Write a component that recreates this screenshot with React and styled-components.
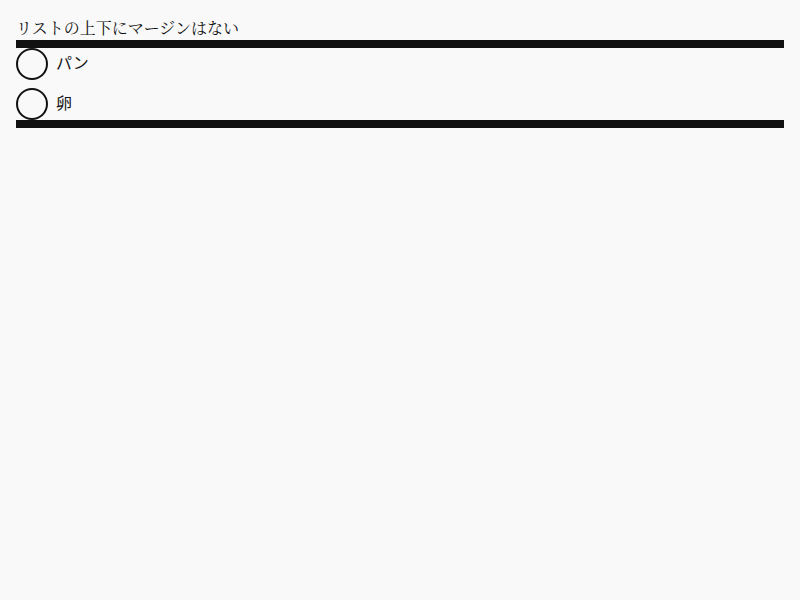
import React from "react";
import styled, { createGlobalStyle } from "styled-components";

const Global = createGlobalStyle`
  html, body { margin: 0; padding: 0; background: #f9f9f9; }
  body { font-family: "Noto Sans CJK JP", sans-serif; color: #111; }
`;

const Page = styled.div`
  padding: 16px;
`;

const Title = styled.div`
  font-family: "Noto Serif CJK JP", "Liberation Serif", serif;
  font-size: 16px;
  line-height: 24px;
  height: 24px;
`;

const Rule = styled.div`
  height: 8px;
  background: #111;
`;

const List = styled.ul`
  list-style: none;
  margin: 0;
  padding: 0;
  display: flex;
  flex-direction: column;
  gap: 8px;
`;

const Item = styled.li`
  display: flex;
  align-items: center;
  gap: 8px;
  height: 32px;
  font-size: 16px;
`;

const Label = styled.span`
  position: relative;
  top: -2px;
`;

const Circle = styled.span`
  box-sizing: border-box;
  width: 32px;
  height: 32px;
  border: 2px solid #111;
  border-radius: 50%;
  flex: none;
`;

export default function App() {
  return (
    <>
      <Global />
      <Page>
        <Title>リストの上下にマージンはない</Title>
        <Rule />
        <List>
          {["パン", "卵"].map((t) => (
            <Item key={t}>
              <Circle />
              <Label>{t}</Label>
            </Item>
          ))}
        </List>
        <Rule />
      </Page>
    </>
  );
}
